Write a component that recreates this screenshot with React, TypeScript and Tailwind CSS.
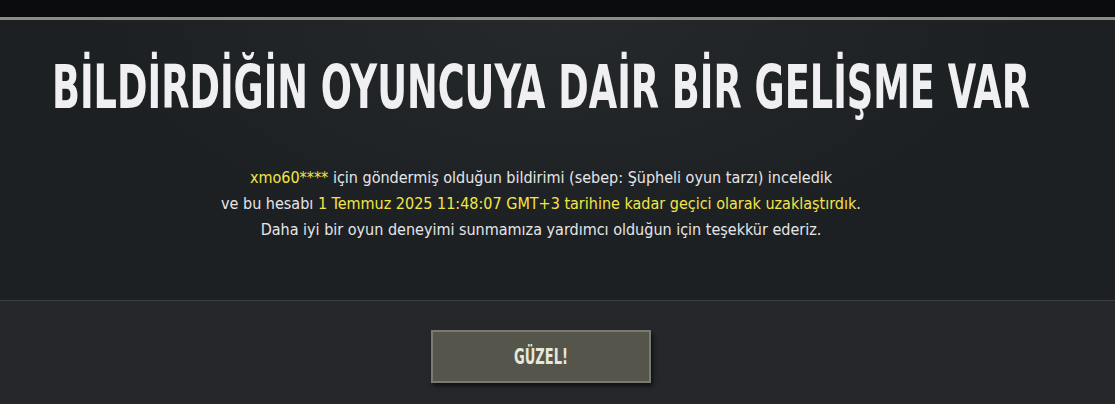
import React, { useLayoutEffect, useRef, useState } from "react";

export default function App() {
  const font = { fontFamily: '"DejaVu Sans Condensed", "DejaVu Sans", sans-serif' };
  const ref = useRef<HTMLHeadingElement>(null);
  const [sx, setSx] = useState(0.65);
  useLayoutEffect(() => {
    if (ref.current) {
      const w = ref.current.offsetWidth;
      if (w > 0) setSx(978 / w);
    }
  }, []);
  return (
    <div className="w-[1115px] h-[404px] overflow-hidden flex flex-col bg-[#26272a]" style={font}>
      <div className="h-[17px] bg-[#0b0c0e] shrink-0" />
      <div className="h-[3px] bg-[#8a8b82] shrink-0" />
      <div className="h-[280px] shrink-0 flex flex-col items-center bg-[radial-gradient(ellipse_at_50%_0%,#26292b_0%,#1d2023_60%)] pr-[33px]">
        <div className="mt-[21px] h-[90px] w-full flex items-center justify-center">
          <h1
            ref={ref}
            className="inline-block whitespace-nowrap text-[61px] leading-none font-bold text-[#f0eff2] shrink-0"
            style={{ transform: `scaleX(${sx})` }}
          >
            BİLDİRDİĞİN OYUNCUYA DAİR BİR GELİŞME VAR
          </h1>
        </div>
        <div className="mt-[34px] text-center text-[16px] leading-[26px] text-[#e6e6e8]">
          <p>
            <span className="text-[#f2e644]">xmo60****</span> için göndermiş olduğun bildirimi (sebep: Şüpheli oyun tarzı) inceledik
          </p>
          <p>
            ve bu hesabı <span className="text-[#f2e644]">1 Temmuz 2025 11:48:07 GMT+3 tarihine kadar geçici olarak uzaklaştırdık</span>.
          </p>
          <p>Daha iyi bir oyun deneyimi sunmamıza yardımcı olduğun için teşekkür ederiz.</p>
        </div>
      </div>
      <div className="h-[1px] bg-[#3c3d40] shrink-0" />
      <div className="flex-1 flex justify-center pr-[33px] pt-[29px]">
        <button className="w-[220px] h-[53px] bg-[#55554c] border-2 border-[#7a7b70] shadow-[2px_3px_4px_rgba(0,0,0,0.6)] flex items-center justify-center">
          <span className="inline-block text-[22px] font-bold text-[#e8e8da] scale-x-[0.66]">GÜZEL!</span>
        </button>
      </div>
    </div>
  );
}
